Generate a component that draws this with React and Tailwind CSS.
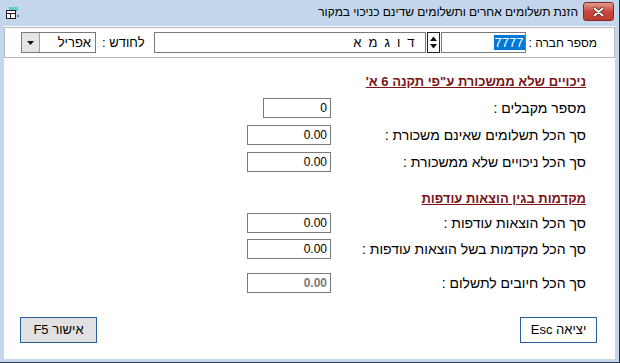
import React from 'react';

const FONT = { fontFamily: '"Liberation Sans", Arial, sans-serif' };

function Field({ value, width, bold }) {
  return (
    <div
      className={`h-[20px] border border-[#7a7a7a] bg-white flex items-center justify-end pr-[3px] text-[12px] leading-none ${
        bold ? 'font-bold text-[#7a7a7a]' : 'text-black'
      }`}
      style={{ width }}
      dir="ltr"
    >
      {value}
    </div>
  );
}

function Row({ label, value, width = 84, bold, className = '' }) {
  return (
    <div className={`flex items-center h-[20px] ${className}`}>
      <div className="w-[255px] text-[14px] text-black leading-none">{label}</div>
      <Field value={value} width={width} bold={bold} />
    </div>
  );
}

function Heading({ children, className = '' }) {
  return (
    <div className={`text-[13px] font-bold underline text-[#7b1416] leading-none ${className}`}>
      {children}
    </div>
  );
}

function AppIcon() {
  return (
    <svg width="16" height="14" viewBox="0 0 16 14">
      <rect x="4" y="1" width="9" height="4" fill="#5fd0c8" />
      <rect x="1.5" y="4.5" width="9" height="8" fill="white" stroke="#1a1a1a" />
      <line x1="1.5" y1="7.5" x2="10.5" y2="7.5" stroke="#1a1a1a" />
      <line x1="5.5" y1="7.5" x2="5.5" y2="12.5" stroke="#1a1a1a" />
      <rect x="12" y="9" width="2" height="2" fill="#6b7a8c" />
    </svg>
  );
}

export default function App() {
  return (
    <div className="w-[620px] h-[363px] flex bg-white overflow-hidden" style={FONT}>
      {/* window */}
      <div className="w-[619px] h-full bg-[#c3d6ec] flex flex-col border-b border-[#2c3e50]">
        {/* title bar */}
        <div className="h-[26px] flex items-center justify-between pl-[5px] pr-[5px]">
          <AppIcon />
          <div className="flex items-center gap-[5px]" dir="rtl">
            <div className="w-[31px] h-[19px] mt-[-3px] rounded-[3px] border border-[#7d2a24] bg-gradient-to-b from-[#e09a90] via-[#c8473c] to-[#c23a2f] flex items-center justify-center">
              <svg width="11" height="10" viewBox="0 0 11 10">
                <path d="M1.5 1.5 L9.5 8.5 M9.5 1.5 L1.5 8.5" stroke="#3a1a18" strokeWidth="3.2" strokeLinecap="round" />
                <path d="M1.5 1.5 L9.5 8.5 M9.5 1.5 L1.5 8.5" stroke="white" strokeWidth="2" strokeLinecap="round" />
              </svg>
            </div>
            <div className="text-[12px] text-black mt-[-2px]" style={{ fontFamily: '"Noto Sans", "Liberation Sans", sans-serif' }}>
              הזנת תשלומים אחרים ותשלומים שדינם כניכוי במקור
            </div>
          </div>
        </div>

        {/* client area */}
        <div className="flex-1 mx-[4px] mb-[3px] bg-white flex flex-col" dir="rtl">
          {/* top strip */}
          <div className="h-[31px] border border-[#b9b9b9] mt-[1px] flex items-center pr-[17px]">
            <div className="text-[12px] text-black whitespace-nowrap">מספר חברה :</div>
            <div className="w-[85px] h-[21px] border border-[#7a7a7a] mr-[3px] flex items-center justify-end pl-[2px]" dir="ltr">
              <span className="bg-[#0078d7] text-white text-[13px] leading-[15px] px-[1px]">7777</span>
            </div>
            <div className="w-[13px] h-[21px] border border-[#222] mr-[1px] flex items-center justify-center">
              <svg width="9" height="15" viewBox="0 0 9 15">
                <path d="M1 6 L4.5 1.5 L8 6 Z" fill="#111" />
                <path d="M1 9 L4.5 13.5 L8 9 Z" fill="#111" />
              </svg>
            </div>
            <div className="w-[272px] h-[21px] border border-[#7a7a7a] mr-[1px] flex items-center pr-[3px] text-[13px] text-black tracking-[7px]">
              דוגמא
            </div>
            <div className="text-[13px] text-black mr-[9px] whitespace-nowrap">לחודש :</div>
            <div className="w-[75px] h-[21px] border border-[#7a7a7a] mr-[6px] flex items-center justify-between pr-[4px]">
              <span className="text-[13px] text-black">אפריל</span>
              <div className="w-[18px] h-[19px] bg-[#e5e5e5] border-r border-[#a0a0a0] flex items-center justify-center">
                <svg width="7" height="4" viewBox="0 0 7 4">
                  <path d="M0 0 L7 0 L3.5 4 Z" fill="#111" />
                </svg>
              </div>
            </div>
          </div>

          {/* body */}
          <div className="flex-1 flex flex-col pr-[29px] pt-[17px]">
            <Heading>ניכויים שלא ממשכורת ע"פי תקנה 6 א'</Heading>
            <Row className="mt-[10px]" label="מספר מקבלים :" value="0" width={68} />
            <Row className="mt-[7px]" label="סך הכל תשלומים שאינם משכורת :" value="0.00" />
            <Row className="mt-[7px]" label="סך הכל ניכויים שלא ממשכורת :" value="0.00" />
            <Heading className="mt-[20px]">מקדמות בגין הוצאות עודפות</Heading>
            <Row className="mt-[8px]" label="סך הכל הוצאות עודפות :" value="0.00" />
            <Row className="mt-[6px]" label="סך הכל מקדמות בשל הוצאות עודפות :" value="0.00" />
            <Row className="mt-[14px]" label="סך הכל חיובים לתשלום :" value="0.00" bold />

            <div className="flex justify-between mt-[24px] pl-[16px]">
              <button className="w-[77px] h-[26px] ml-[-12px] mr-[-11px] border border-[#2a5d9b] bg-white text-[13px] text-black" dir="rtl">
                יציאה Esc
              </button>
              <button className="w-[77px] h-[26px] border border-[#2a5d9b] bg-[#e1e1e1] text-[13px] text-black" dir="rtl">
                אישור F5
              </button>
            </div>
          </div>
        </div>
      </div>
      <div className="w-[1px] h-full bg-[#1e2b38]" />
    </div>
  );
}
